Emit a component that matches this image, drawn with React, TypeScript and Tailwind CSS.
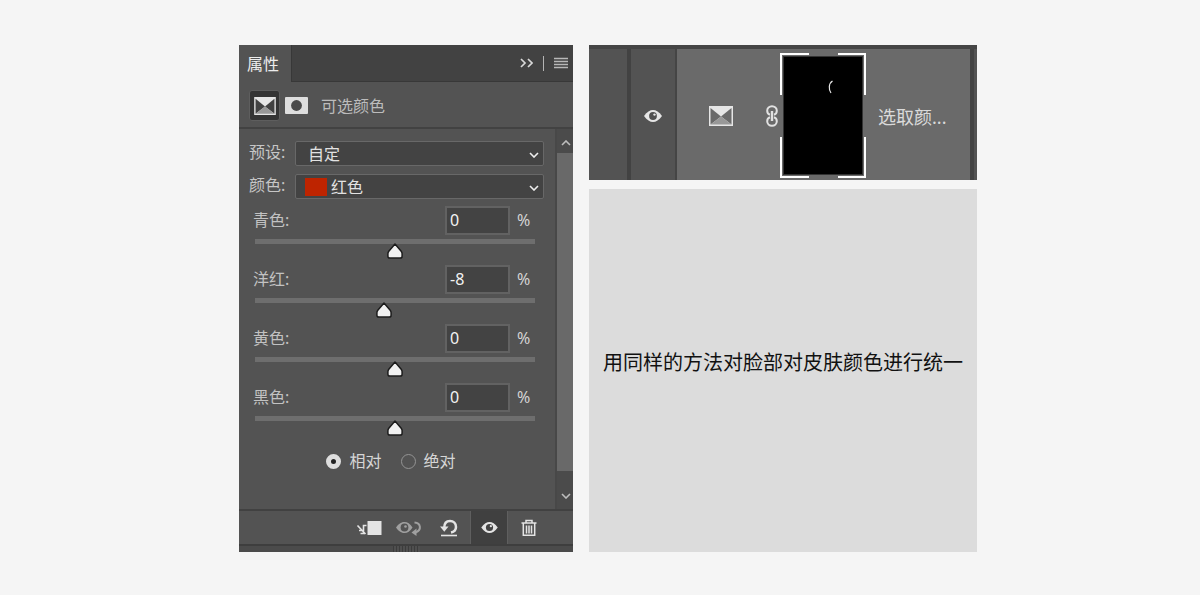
import { useState, type ReactNode } from "react";

const CHANNELS = [
  { id: "cyan", label: "青色", value: 0 },
  { id: "magenta", label: "洋红", value: -8 },
  { id: "yellow", label: "黄色", value: 0 },
  { id: "black", label: "黑色", value: 0 },
];

/* ---------- Icons ---------- */

function EyeIcon({ className = "", pupil = "#424242" }: { className?: string; pupil?: string }) {
  return (
    <svg viewBox="0 0 18 12" className={className} aria-hidden="true">
      <path d="M0 6C3 1.800 6 0 9 0s6 1.800 9 6c-3 4.200-6 6-9 6S3 10.200 0 6Z" fill="currentColor" />
      <circle cx="9" cy="6" r="3.900" fill={pupil} />
      <circle cx="10.500" cy="4.600" r="1.200" fill="currentColor" />
    </svg>
  );
}

function SelectiveColorIcon({ className = "", side = "#424242" }: { className?: string; side?: string }) {
  return (
    <svg viewBox="0 0 24 20" className={className} aria-hidden="true">
      <rect width="24" height="20" fill="#e6e6e6" />
      <path d="M1.500 2v16.500L12 10.500Z" fill={side} />
      <path d="M22.500 2v16.500L12 10.500Z" fill={side} />
      <path d="M1.500 18.500h21L12 10.500Z" fill="#989898" />
    </svg>
  );
}

function MaskIcon() {
  return (
    <svg viewBox="0 0 23 17" className="h-[17px] w-[23px]" aria-hidden="true">
      <rect width="23" height="17" rx="1" fill="#dedede" />
      <circle cx="11.500" cy="8.500" r="5.400" fill="#4a4a4a" />
    </svg>
  );
}

function Chevron({ up = false, className = "" }: { up?: boolean; className?: string }) {
  return (
    <svg viewBox="0 0 10 6" className={`h-[6px] w-[10px] ${className}`} fill="none" stroke="currentColor" aria-hidden="true">
      <path d={up ? "M1 5l4-4 4 4" : "M1 1l4 4 4-4"} strokeWidth="1.600" />
    </svg>
  );
}

function LinkIcon() {
  return (
    <svg viewBox="0 0 12 22" className="h-[22px] w-3" fill="none" stroke="#e2e2e2" strokeWidth="2" aria-hidden="true">
      <path d="M4 9.800C2 9.200 1.200 7.500 1.200 5.800a4.800 4.600 0 0 1 9.600 0c0 1.700-.8 3.400-2.800 4" />
      <path d="M4 12.200c-2 .6-2.800 2.300-2.800 4a4.800 4.600 0 0 0 9.600 0c0-1.700-.8-3.400-2.800-4" />
      <path d="M6 6v10" strokeWidth="2.400" />
    </svg>
  );
}

/* ---------- Properties panel ---------- */

function Dropdown({ id, label, option, swatch }: { id: string; label: string; option: string; swatch?: string }) {
  return (
    <div className="flex h-[25px] items-center">
      <label htmlFor={id} className="w-[46px] shrink-0 pb-1 text-[#c6c6c6]">
        {label}:
      </label>
      <div className="relative flex h-full flex-1 items-center rounded-[2px] border border-[#686868] bg-[#434343]">
        {swatch && <span className={`ml-[9px] h-[18px] w-[22px] shrink-0 ${swatch}`} />}
        <select
          id={id}
          className={`h-full w-full appearance-none bg-transparent text-[#e2e2e2] outline-none ${swatch ? "pl-1" : "pl-3"}`}
        >
          <option>{option}</option>
        </select>
        <Chevron className="pointer-events-none absolute top-[10px] right-1 text-[#eeeeee]" />
      </div>
    </div>
  );
}

function ChannelSlider({ id, label, initial }: { id: string; label: string; initial: number }) {
  const [value, setValue] = useState(initial);
  return (
    <div className="h-[59px] pr-[9px] pl-[6px]">
      <div className="flex h-[29px] items-center">
        <label htmlFor={id} className="-ml-[2px] flex-1 pb-[2px] text-[#c2c2c2]">
          {label}:
        </label>
        <input
          id={id}
          value={value}
          onChange={(e) => setValue(Number(e.target.value) || 0)}
          className="h-[29px] w-[65px] border-2 border-[#626262] bg-[#434343] pb-px pl-[3px] text-[#f2f2f2] outline-none"
        />
        <span className="w-[25px] pb-px pl-[7px] text-[#d4d4d4]">%</span>
      </div>
      <div className="relative mt-1 h-[21px]">
        <div className="h-[5px] bg-[#6e6e6e]" />
        <svg
          viewBox="0 0 16 16"
          className="absolute top-1 size-4 -translate-x-1/2"
          style={{ left: `${(value + 100) / 2}%` }}
          aria-hidden="true"
        >
          <path
            d="M8 1L14.200 8.200Q15.100 9.400 15.100 10.800V13.200Q15.100 15.100 13.200 15.100H2.800Q.9 15.100.9 13.200V10.800Q.9 9.400 1.800 8.200Z"
            fill="#f1f1f1"
            stroke="#1c1c1c"
            strokeWidth="1.500"
            strokeLinejoin="round"
          />
        </svg>
        <input
          type="range"
          min={-100}
          max={100}
          value={value}
          onChange={(e) => setValue(Number(e.target.value))}
          aria-label={label}
          className="absolute inset-0 w-full opacity-0"
        />
      </div>
    </div>
  );
}

function MethodRadio({ label, checked = false }: { label: string; checked?: boolean }) {
  return (
    <label className="flex items-center gap-2 text-[#d6d6d6]">
      <input
        type="radio"
        name="method"
        defaultChecked={checked}
        className="size-[15px] appearance-none rounded-full border border-[#949494] bg-transparent checked:border-5 checked:border-[#dedede] checked:bg-[#222222]"
      />
      {label}
    </label>
  );
}

function FooterButton({ label, active = false, children }: { label: string; active?: boolean; children: ReactNode }) {
  return (
    <button
      aria-label={label}
      className={`flex h-full w-[38px] items-center justify-center text-[#e4e4e4] ${
        active ? "border-x border-[#5f5f5f] bg-[#404040]" : ""
      }`}
    >
      {children}
    </button>
  );
}

function PanelFooter() {
  return (
    <div className="flex h-[35px] justify-end gap-[2px] border-t-2 border-[#414141] pr-[25px]">
      <FooterButton label="剪切到图层">
        <svg viewBox="0 0 26 16" className="h-4 w-[26px]" fill="none" stroke="currentColor" strokeWidth="1.600" aria-hidden="true">
          <rect x="11.500" y="1" width="14" height="14" fill="currentColor" stroke="none" />
          <path d="M10.500 5.500H7.500V13M1.500 5.500l8 8.500M4.500 13.500h4M3 10.500h3.500" />
        </svg>
      </FooterButton>
      <FooterButton label="查看上一状态">
        <svg viewBox="0 0 26 18" className="h-[18px] w-[26px] text-[#a0a0a0]" aria-hidden="true">
          <path d="M0 8.500C3 4.300 5.500 3 8.500 3S14 4.500 16.500 8.500c-2.500 4-5 5.500-8 5.500S3 12.700 0 8.500Z" fill="currentColor" />
          <circle cx="8.500" cy="8.500" r="3.900" fill="#535353" />
          <circle cx="9.500" cy="7.500" r="1.300" fill="currentColor" />
          <path d="M18.500 3.500C25 4 26 11 19.500 13.500" fill="none" stroke="currentColor" strokeWidth="2" />
          <path d="M20.500 9.500v7.500L15.500 13.500Z" fill="currentColor" />
        </svg>
      </FooterButton>
      <FooterButton label="复位">
        <svg viewBox="0 0 18 18" className="size-[18px]" fill="none" stroke="currentColor" aria-hidden="true">
          <path d="M4.200 9C4.200 4.500 6.500 2 10 2s6 2.600 6 6c0 2.700-1.800 4.800-5 5.500" strokeWidth="2.500" />
          <path d="M0 7.500h8.500L4.300 12.800Z" fill="currentColor" stroke="none" />
          <path d="M1 16.500h16" strokeWidth="1.600" />
        </svg>
      </FooterButton>
      <FooterButton label="切换可见性" active>
        <EyeIcon className="h-[11px] w-[17px]" />
      </FooterButton>
      <FooterButton label="删除">
        <svg viewBox="0 0 16 18" className="h-[18px] w-4" fill="none" stroke="currentColor" strokeWidth="1.500" aria-hidden="true">
          <path d="M.5 4h15M5 4V1.500h6V4M2.300 4v12.300h11.400V4M5.500 6.500v8M8 6.500v8M10.500 6.500v8" />
        </svg>
      </FooterButton>
    </div>
  );
}

function PropertiesPanel() {
  return (
    <section className="flex flex-col bg-[#535353]">
      <div className="flex h-[37px] bg-[#424242]">
        <h2 className="flex w-[53px] items-center border-r border-[#383838] bg-[#535353] pl-2 text-[#ececec]">属性</h2>
        <div className="flex flex-1 items-center justify-end border-b border-[#383838] pr-[5px] text-[#d8d8d8]">
          <button aria-label="折叠">
            <svg viewBox="0 0 13 10" className="h-[10px] w-[13px]" fill="none" stroke="currentColor" strokeWidth="1.700" aria-hidden="true">
              <path d="M1 1l4 4-4 4M8 1l4 4-4 4" />
            </svg>
          </button>
          <span className="mx-[10px] h-[15px] w-px bg-[#b4b4b4]" />
          <button aria-label="菜单">
            <svg viewBox="0 0 14 12" className="h-3 w-[14px]" stroke="#b8b8b8" strokeWidth="1.300" aria-hidden="true">
              <path d="M0 1.500h14M0 4.500h14M0 7.500h14M0 10.500h14" />
            </svg>
          </button>
        </div>
      </div>

      <div className="flex h-[47px] items-center border-b-2 border-[#424242] pt-[2px] pl-[10px]">
        <span className="flex size-[31px] items-center justify-center rounded-[3px] border border-[#5e5e5e] bg-[#353535]">
          <SelectiveColorIcon className="h-[18px] w-[22px]" />
        </span>
        <span className="mr-[13px] ml-[5px]">
          <MaskIcon />
        </span>
        <h3 className="text-[#bcbcbc]">可选颜色</h3>
      </div>

      <div className="flex flex-1">
        <div className="flex-1 pt-3 pr-[11px] pb-9 pl-[10px]">
          <div className="mb-[7px] flex flex-col gap-2">
            <Dropdown id="preset" label="预设" option="自定" />
            <Dropdown id="color" label="颜色" option="红色" swatch="bg-[#be2400]" />
          </div>
          {CHANNELS.map((c) => (
            <ChannelSlider key={c.id} id={c.id} label={c.label} initial={c.value} />
          ))}
          <div className="mt-[7px] flex justify-center gap-[19px] pr-[11px]">
            <MethodRadio label="相对" checked />
            <MethodRadio label="绝对" />
          </div>
        </div>
        <div className="flex w-[18px] flex-col border-l-2 border-[#484848] bg-[#4b4b4b] text-[#bdbdbd]">
          <button aria-label="向上滚动" className="flex h-6 items-center justify-center pt-1 pl-[2px]">
            <Chevron up />
          </button>
          <div className="flex-1 bg-[#696969]" />
          <button aria-label="向下滚动" className="flex h-[38px] items-center justify-center pt-3 pl-[2px]">
            <Chevron />
          </button>
        </div>
      </div>

      <PanelFooter />
      <div className="flex h-2 justify-center border-t-2 border-[#3e3e3e] bg-[#4b4b4b]">
        <span className="w-[27px] bg-[repeating-linear-gradient(90deg,#3c3c3c_0_1px,#4f4f4f_1px_3px)]" />
      </div>
    </section>
  );
}

/* ---------- Layer row ---------- */

function MaskThumbnail() {
  return (
    <div className="relative h-[125px] w-[86px] p-[3px]">
      <div className="h-full border border-[#333333] bg-black" />
      <span className="absolute top-0 left-0 h-[42px] w-[29px] border-t-2 border-l-2 border-white" />
      <span className="absolute top-0 right-0 h-[42px] w-[28px] border-t-2 border-r-2 border-white" />
      <span className="absolute bottom-0 left-0 h-[41px] w-[29px] border-b-2 border-l-2 border-white" />
      <span className="absolute right-0 bottom-0 h-[41px] w-[28px] border-r-2 border-b-2 border-white" />
      <svg viewBox="0 0 6 14" className="absolute top-[27px] left-[48px] h-[14px] w-[6px]" fill="none" aria-hidden="true">
        <path d="M4.500 1C.5 3.500.5 9.500 3 13" stroke="#e8e8e8" strokeWidth="1.200" />
      </svg>
    </div>
  );
}

function LayerRow() {
  return (
    <section className="flex h-[135px] border-t-4 border-[#454545] bg-[#535353]">
      <div className="w-[42px] border-r-4 border-[#424242]" />
      <button aria-label="图层可见性" className="flex w-[46px] items-center justify-center border-r-2 border-[#454545] pt-[2px] text-[#e6e6e6]">
        <EyeIcon className="h-3 w-[18px]" pupil="#505050" />
      </button>
      <div className="flex flex-1 items-center bg-[#6a6a6a] pt-[2px] pl-8">
        <SelectiveColorIcon className="h-5 w-6" side="#6a6a6a" />
        <span className="mr-[2px] ml-[33px]">
          <LinkIcon />
        </span>
        <MaskThumbnail />
        <span className="ml-3 pt-[2px] text-lg text-[#dadada]">选取颜...</span>
      </div>
      <div className="w-[7px] border-l-4 border-[#434343]" />
    </section>
  );
}

export default function App() {
  return (
    <main
      lang="zh-CN"
      className="min-h-screen bg-[#f5f5f5] pt-[45px] pb-10 pl-4 font-['Noto_Sans','Noto_Sans_CJK_SC',sans-serif] text-base leading-6"
    >
      <div className="mx-auto grid max-w-[738px] grid-cols-[334fr_388fr] gap-4">
        <PropertiesPanel />
        <div className="flex flex-col gap-[9px]">
          <LayerRow />
          <div className="flex flex-1 items-center justify-center bg-[#dcdcdc] pb-4">
            <p className="text-[20px] whitespace-nowrap text-[#111111]">用同样的方法对脸部对皮肤颜色进行统一</p>
          </div>
        </div>
      </div>
    </main>
  );
}
